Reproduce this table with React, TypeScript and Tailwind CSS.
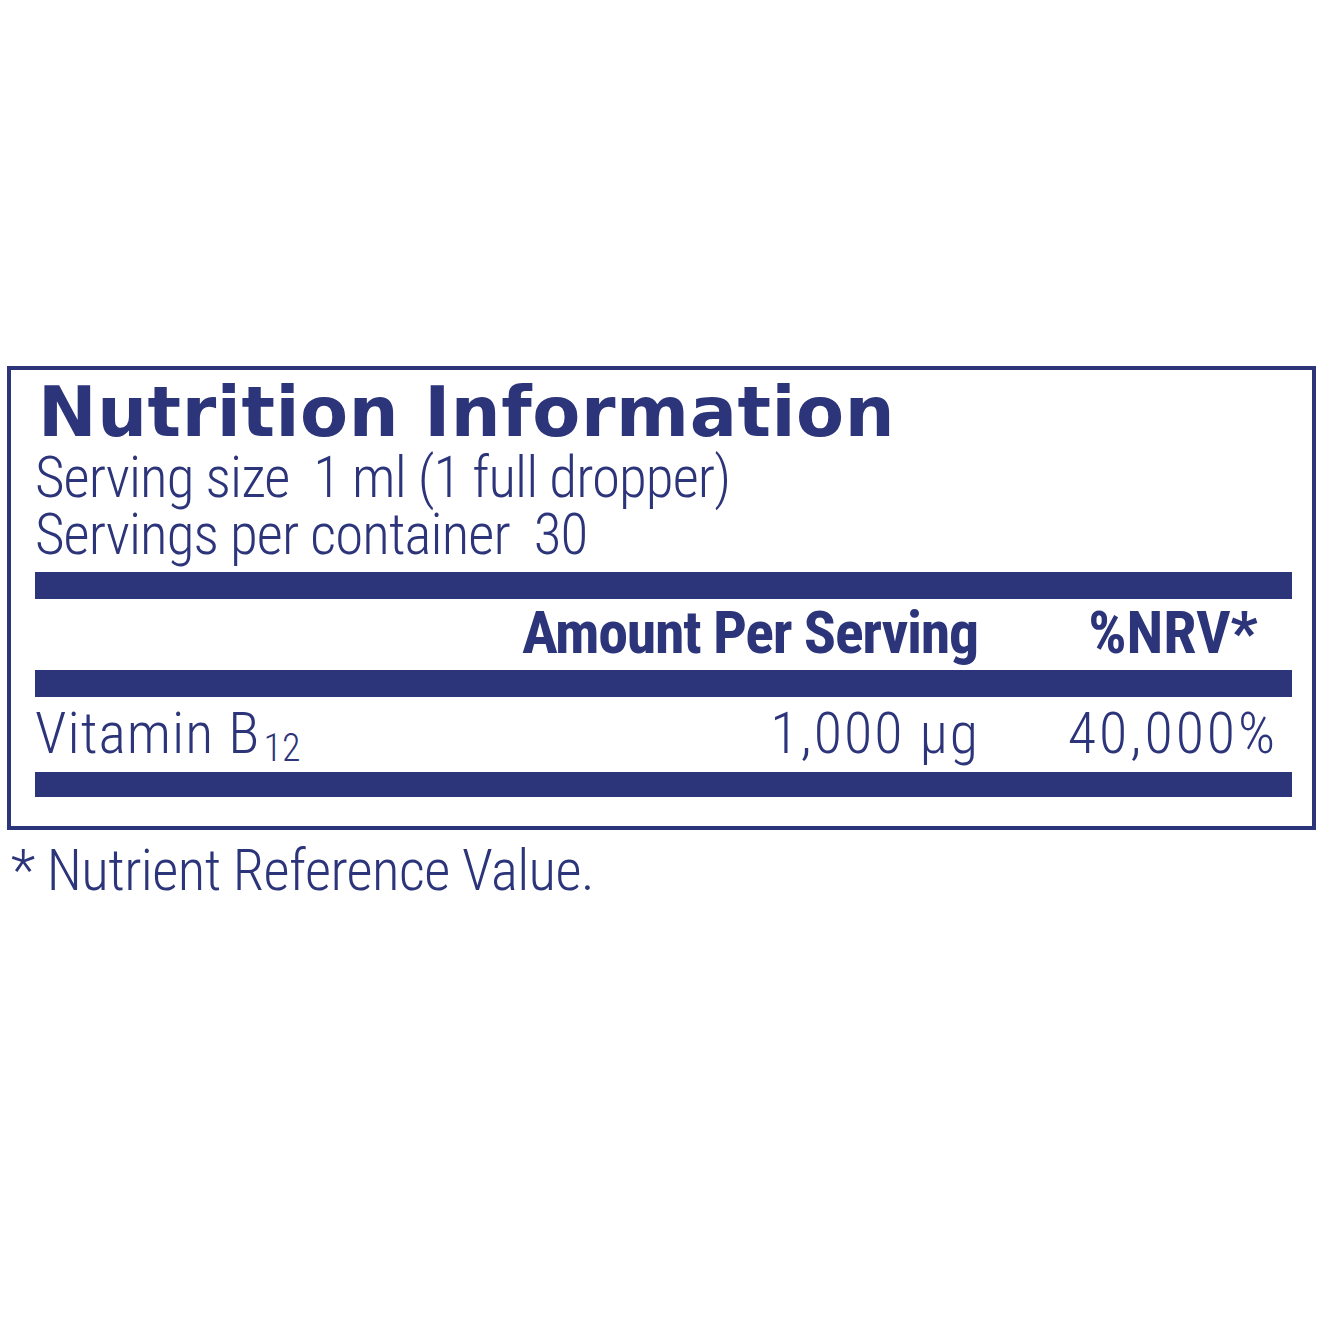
const cond = "font-['Roboto_Condensed',sans-serif]";

function Bar() {
  return <div className="h-[27px] bg-[#2c347a]" />;
}

export default function App() {
  return (
    <div className="min-h-[1320px] bg-white pt-[366px] text-[#2c347a]">
      <div className="ml-[7px] w-[1309px] border-4 border-[#2c347a] pl-[24px] pr-[20px] pb-[29px]">
        <h1 className="ml-[3px] pt-[7px] font-['DejaVu_Sans',sans-serif] text-[70px] font-bold leading-[70px] tracking-[0.6px]">
          Nutrition Information
        </h1>
        <div className={`mt-[2px] ${cond} text-[57px] font-light leading-[57px] tracking-[-0.9px]`}>
          <p className="whitespace-pre">Serving size  1 ml (1 full dropper)</p>
          <p className="whitespace-pre">Servings per container  30</p>
        </div>
        <div className="mt-[9px]">
          <Bar />
        </div>

        {/* column headings */}
        <div className={`flex h-[71px] ${cond} text-[60px] font-bold leading-[68px]`}>
          <div className="flex-1" />
          <div className="mr-[76px] text-right tracking-[-1.3px]">Amount Per Serving</div>
          <div className="w-[238px] text-center">%NRV*</div>
        </div>
        <Bar />

        {/* nutrient row */}
        <div className={`flex h-[75px] ${cond} text-[58px] font-light leading-[72px]`}>
          <div className="flex-1 tracking-[1px]">
            Vitamin B
            <span className="relative top-[8px] ml-[3px] text-[38px] tracking-normal">12</span>
          </div>
          <div className="mr-[74px] text-right tracking-[2px]">1,000 µg</div>
          <div className="w-[238px] text-center tracking-[3px]">40,000%</div>
        </div>
        <div className="h-[25px] bg-[#2c347a]" />
      </div>
      <p className={`ml-[11px] mt-[12px] whitespace-pre ${cond} text-[57px] font-light leading-[57px] tracking-[-0.6px]`}>
        * Nutrient Reference Value.
      </p>
    </div>
  );
}
